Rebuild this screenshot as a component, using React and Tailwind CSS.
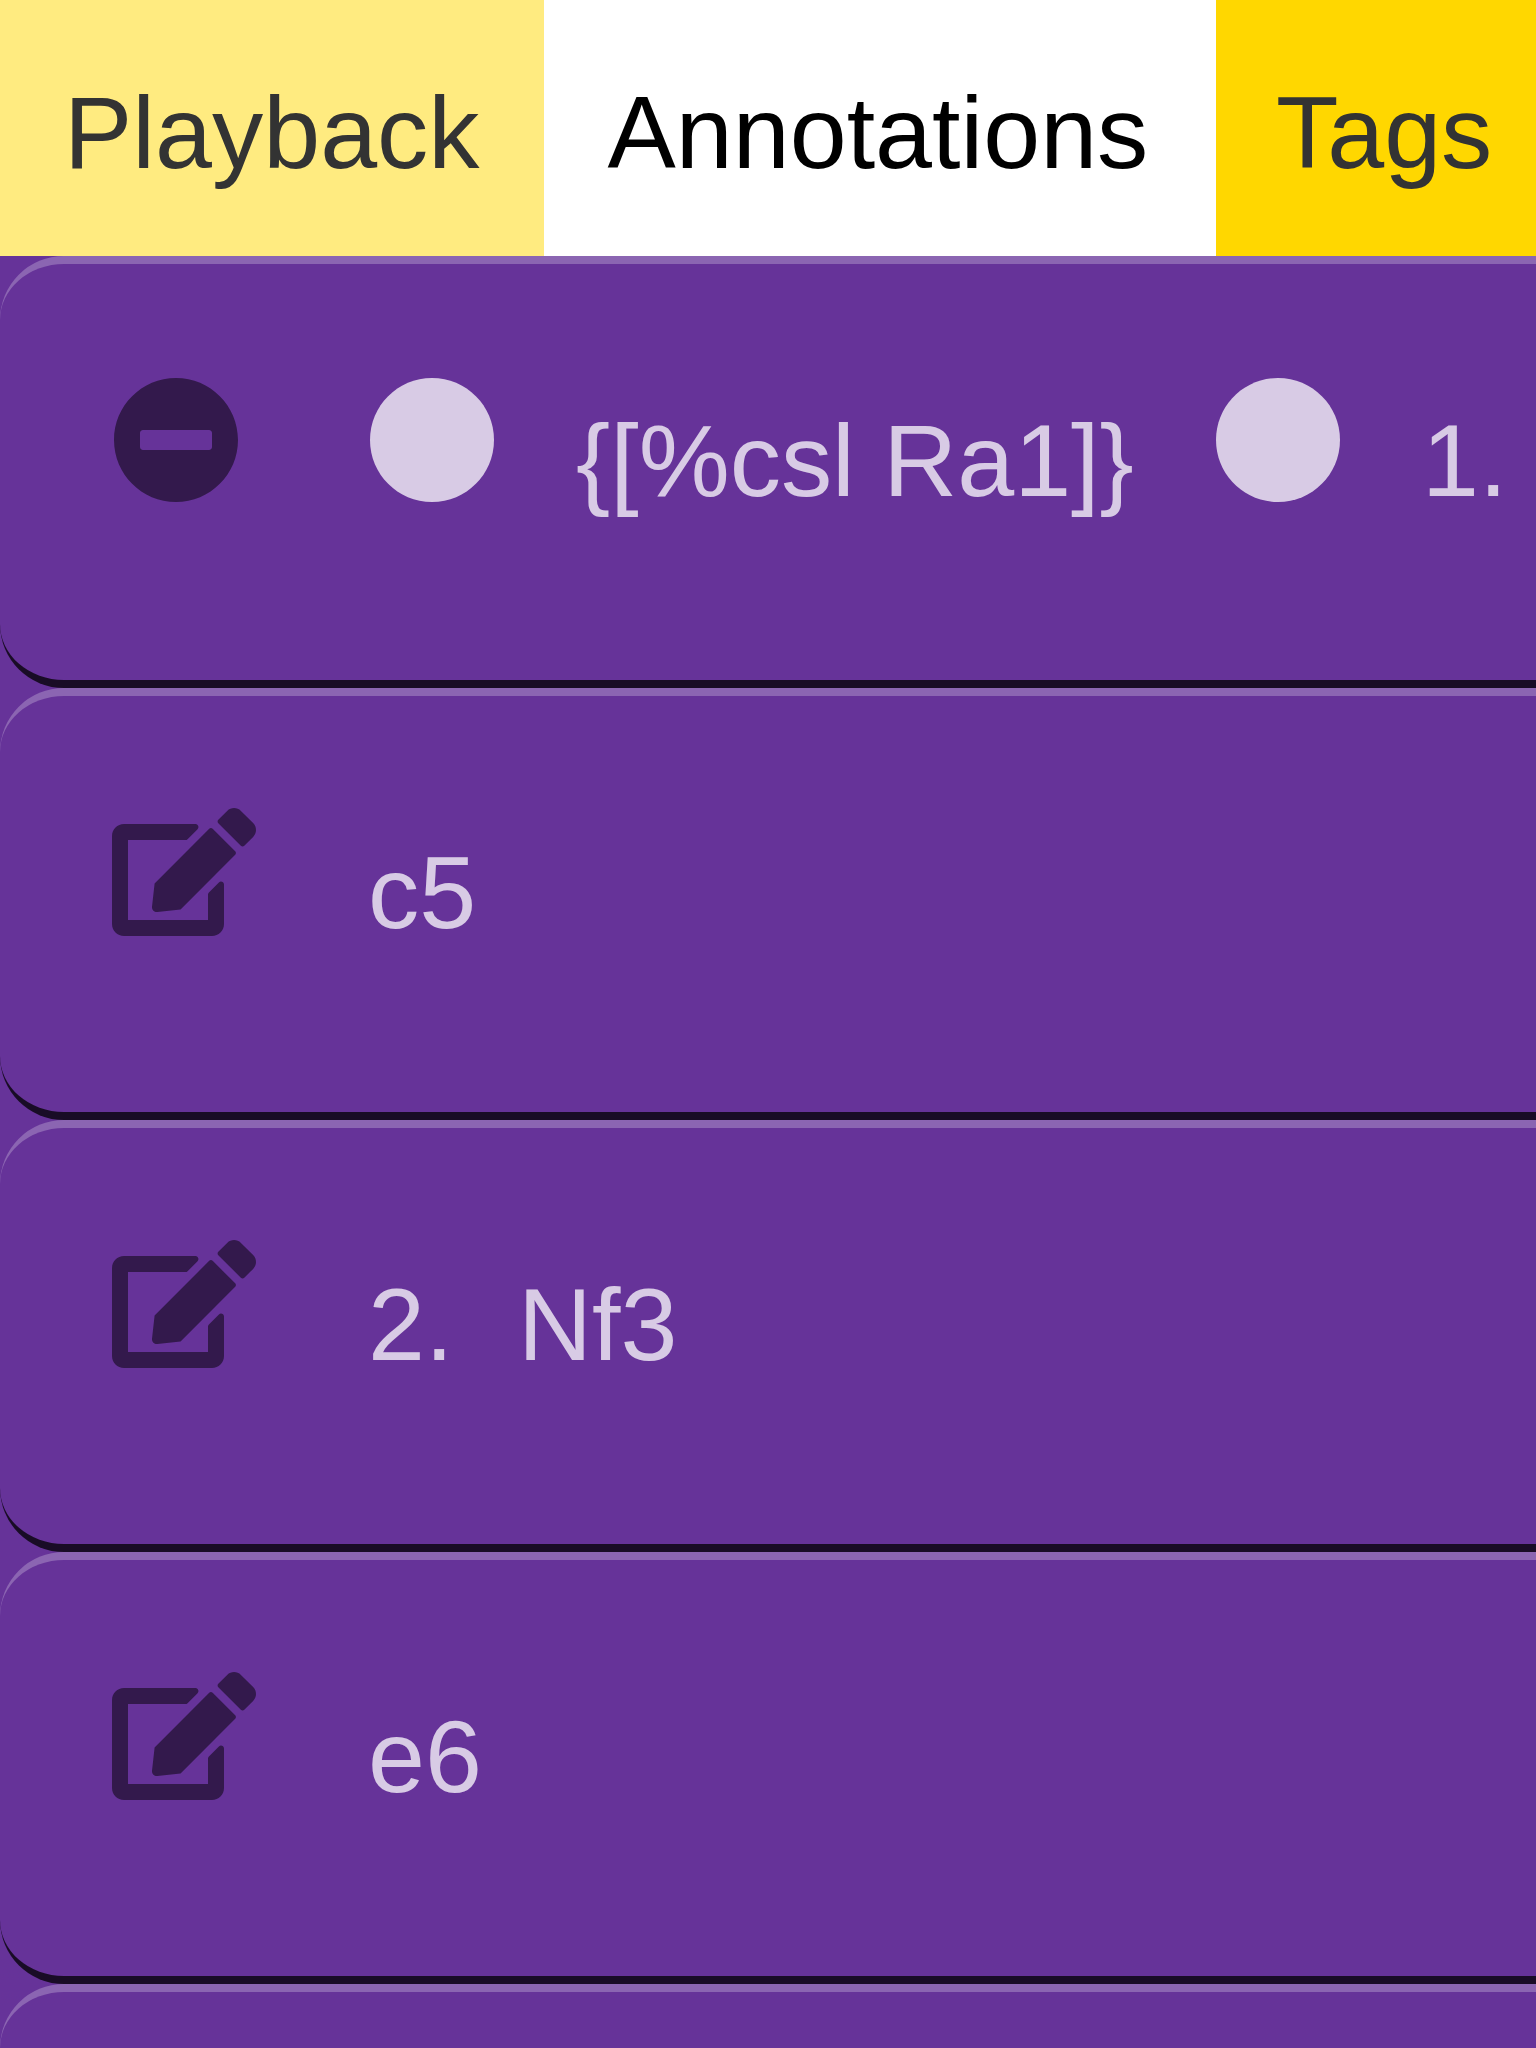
import { FaCircle, FaEdit, FaMinusCircle } from "react-icons/fa";

function Tab({ label, className }) {
  return (
    <button type="button" className={`flex h-64 shrink-0 items-start pt-[69px] leading-[128px] whitespace-nowrap ${className}`}>
      {label}
    </button>
  );
}

function Row({ icon, children }) {
  return (
    <li className="flex h-[432px] items-start overflow-hidden rounded-[64px] rounded-r-none border-y-8 border-t-white/25 border-b-black/75 pl-28 text-white/75">
      <span className="mt-28 w-64 shrink-0 text-black/50">{icon}</span>
      {children}
    </li>
  );
}

function Move({ className = "", children }) {
  return <span className={`mt-[133px] shrink-0 leading-[128px] whitespace-pre ${className}`}>{children}</span>;
}

const editIcon = <FaEdit className="h-32 w-36" />;

export default function App() {
  return (
    <div className="h-[2048px] w-[1536px] overflow-hidden bg-[#663399] font-['Liberation_Sans',Arial,sans-serif] text-[102.4px]">
      <nav className="flex">
        <Tab label="Playback" className="w-[544px] bg-[#ffeb80] pl-16 text-[#333]" />
        <Tab label="Annotations" className="w-[672px] bg-white pl-[63.5px] text-black" />
        <Tab label="Tags" className="w-80 bg-[#ffd700] pl-[60px] text-[#333]" />
      </nav>
      <ul>
        <Row icon={<FaMinusCircle className="size-32" />}>
          <FaCircle className="mt-28 size-32 shrink-0" />
          <Move className="ml-20 w-[638px]">{"{[%csl Ra1]}"}</Move>
          <FaCircle className="mt-28 size-32 shrink-0" />
          <Move className="ml-20">1.</Move>
        </Row>
        <Row icon={editIcon}>
          <Move>c5</Move>
        </Row>
        <Row icon={editIcon}>
          <Move className="w-[150px]">2.</Move>
          <Move>Nf3</Move>
        </Row>
        <Row icon={editIcon}>
          <Move>e6</Move>
        </Row>
        <Row icon={editIcon} />
      </ul>
    </div>
  );
}
